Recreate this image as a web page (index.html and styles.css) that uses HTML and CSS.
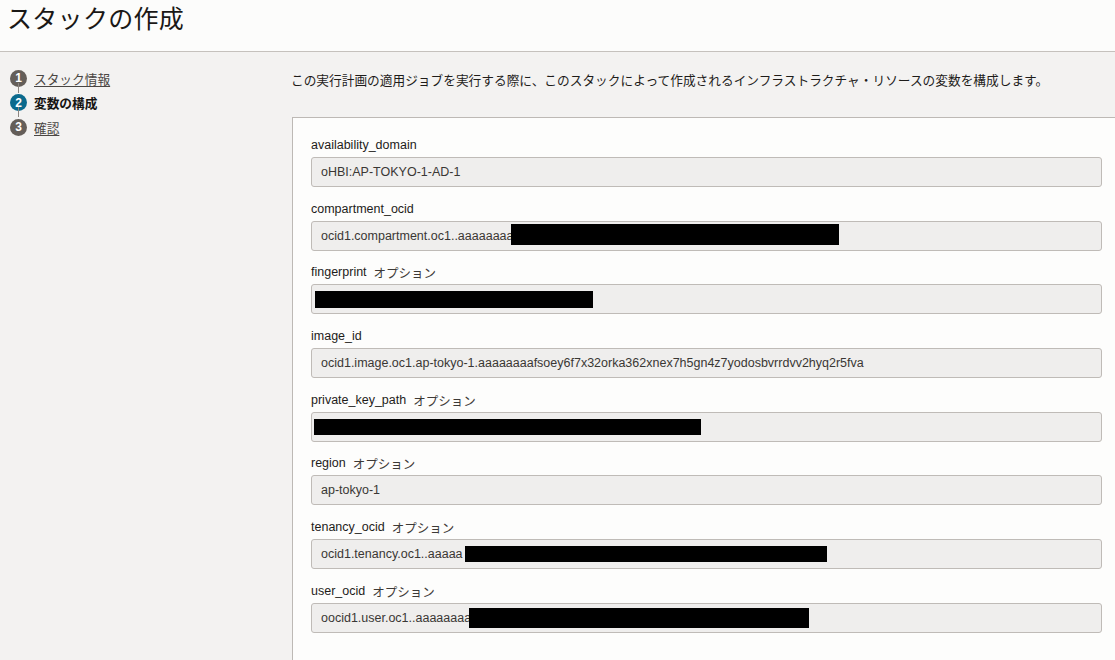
FILE: index.html
```html
<!DOCTYPE html>
<html lang="ja">
<head>
<meta charset="utf-8">
<title>スタックの作成</title>
<link rel="stylesheet" href="styles.css">
</head>
<body>
<header class="page-header">
  <h1 class="title">スタックの作成</h1>
</header>
<div class="layout">
  <nav class="steps">
    <div class="step done">
      <span class="num">1</span><a class="step-link" href="#">スタック情報</a>
    </div>
    <div class="step current">
      <span class="num">2</span><span class="step-text">変数の構成</span>
    </div>
    <div class="step">
      <span class="num">3</span><a class="step-link" href="#">確認</a>
    </div>
  </nav>
  <main class="main">
    <p class="desc">この実行計画の適用ジョブを実行する際に、このスタックによって作成されるインフラストラクチャ・リソースの変数を構成します。</p>
    <section class="panel">
      <div class="field">
        <div class="label">availability_domain</div>
        <div class="input">oHBI:AP-TOKYO-1-AD-1</div>
      </div>
      <div class="field">
        <div class="label">compartment_ocid</div>
        <div class="input">ocid1.compartment.oc1..aaaaaaaa<span class="redact r-comp"></span></div>
      </div>
      <div class="field">
        <div class="label">fingerprint<span class="opt">オプション</span></div>
        <div class="input"><span class="redact r-fp"></span></div>
      </div>
      <div class="field">
        <div class="label">image_id</div>
        <div class="input">ocid1.image.oc1.ap-tokyo-1.aaaaaaaafsoey6f7x32orka362xnex7h5gn4z7yodosbvrrdvv2hyq2r5fva</div>
      </div>
      <div class="field">
        <div class="label">private_key_path<span class="opt">オプション</span></div>
        <div class="input"><span class="redact r-pk"></span></div>
      </div>
      <div class="field">
        <div class="label">region<span class="opt">オプション</span></div>
        <div class="input">ap-tokyo-1</div>
      </div>
      <div class="field">
        <div class="label">tenancy_ocid<span class="opt">オプション</span></div>
        <div class="input">ocid1.tenancy.oc1..aaaaa<span class="redact r-ten"></span></div>
      </div>
      <div class="field">
        <div class="label">user_ocid<span class="opt">オプション</span></div>
        <div class="input">oocid1.user.oc1..aaaaaaaa<span class="redact r-user"></span></div>
      </div>
    </section>
  </main>
</div>
</body>
</html>
```
FILE: styles.css
```css
* { box-sizing: border-box; }
html, body { margin: 0; padding: 0; }
body {
  background: #f3f2f1;
  font-family: "Liberation Sans", "Noto Sans CJK JP", sans-serif;
  font-size: 12.5px;
  color: #161513;
  width: 1115px;
  height: 660px;
  overflow: hidden;
}
.page-header {
  background: #fcfcfb;
  height: 52px;
  border-bottom: 1px solid #c5c1bd;
  padding: 2px 0 0 7px;
}
.title {
  margin: 0;
  font-family: "Noto Sans CJK JP", "Liberation Sans", sans-serif;
  font-weight: 400;
  font-size: 25px;
  line-height: 30px;
  color: #1a1816;
  letter-spacing: 0.3px;
}
.layout {
  display: flex;
}
.steps {
  width: 291px;
  flex: none;
  padding: 14px 0 0 10px;
  display: flex;
  flex-direction: column;
}
.step {
  display: flex;
  align-items: center;
  gap: 7px;
  height: 24.5px;
  position: relative;
  font-family: "Noto Sans CJK JP", sans-serif;
  font-size: 12.7px;
}
.step + .step::before {
  content: "";
  position: absolute;
  left: 8px;
  top: -8px;
  width: 1px;
  height: 10px;
  background: #8b8580;
}
.num {
  width: 17px;
  height: 17px;
  border-radius: 50%;
  background: #645e59;
  color: #fff;
  font-family: "Liberation Sans", sans-serif;
  font-weight: 700;
  font-size: 12px;
  display: flex;
  align-items: center;
  justify-content: center;
  flex: none;
}
.current .num { background: #0b6a8d; }
.step-link {
  color: #4a4643;
  text-decoration: underline;
  text-underline-offset: 2px;
}
.step-text {
  font-weight: 700;
  color: #161513;
}
.main {
  flex: 1;
  padding-top: 19px;
}
.desc {
  margin: 0 0 28px 0;
  font-family: "Noto Sans CJK JP", sans-serif;
  font-size: 12.7px;
  line-height: 18px;
  color: #1e1c1a;
}
.panel {
  margin-left: 1px;
  background: #fdfdfc;
  border: 1px solid #bdb9b5;
  border-right: none;
  padding: 19px 13px 40px 18px;
}
.field + .field { margin-top: 13.7px; }
.label {
  height: 17px;
  line-height: 17px;
  margin-bottom: 3px;
  color: #1e1c1a;
  display: flex;
  align-items: center;
  white-space: nowrap;
}
.opt {
  margin-left: 7px;
  font-family: "Noto Sans CJK JP", sans-serif;
  line-height: 17px;
  color: #3d3a37;
}
.input {
  height: 30px;
  background: #efeeed;
  border: 1px solid #bfbbb7;
  border-radius: 3px;
  padding-left: 9px;
  display: flex;
  align-items: center;
  color: #3a3734;
  white-space: nowrap;
  overflow: hidden;
}
.redact {
  display: inline-block;
  background: #000;
  flex: none;
}
.r-comp { width: 328px; height: 21px; margin-left: -3px; margin-top: -3px; }
.r-fp { width: 278px; height: 17px; margin-left: -6px; }
.r-pk { width: 387px; height: 16px; margin-left: -7px; }
.r-ten { width: 362px; height: 16px; margin-left: 2px; }
.r-user { width: 340px; height: 20px; margin-left: -2px; }
```
